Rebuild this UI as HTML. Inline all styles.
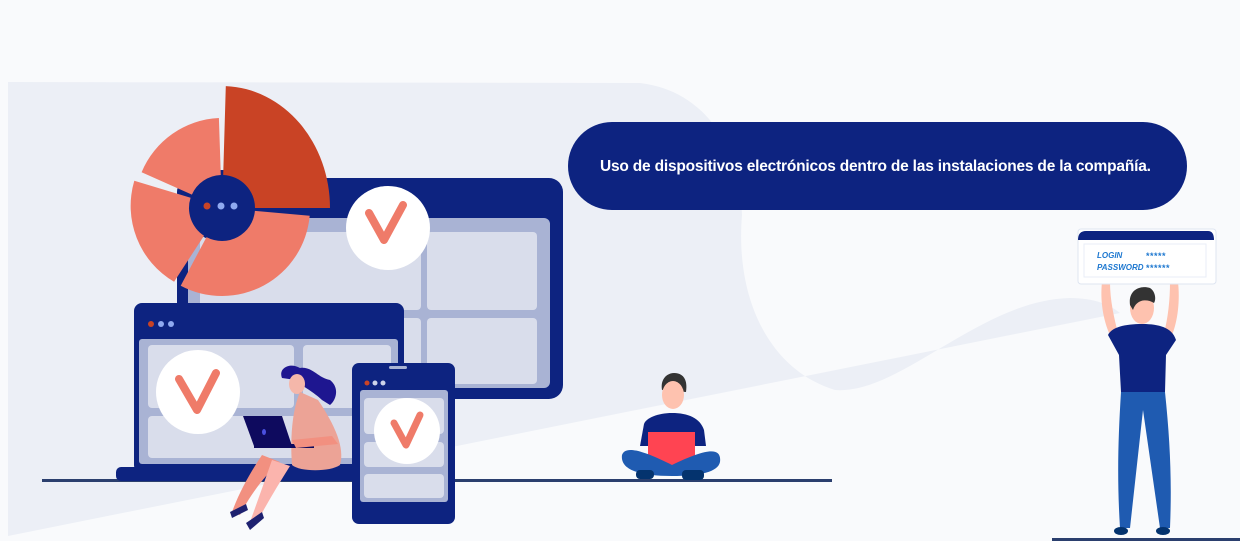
<!DOCTYPE html>
<html><head><meta charset="utf-8"><style>
html,body{margin:0;padding:0;width:1240px;height:541px;overflow:hidden;background:#f9fafc;}
svg{position:absolute;left:0;top:0}
.bubble{position:absolute;left:568px;top:122px;width:619px;height:88px;border-radius:44px;background:#0d2380;color:#fff;font:bold 15.5px "Liberation Sans",sans-serif;line-height:90px;box-sizing:border-box;padding-left:32px;letter-spacing:-0.2px;white-space:nowrap}
</style></head><body>
<svg width="1240" height="541" viewBox="0 0 1240 541">
<path d="M8,82 L640,83 C700,90 740,140 742,215 C735,300 770,370 835,390 C900,395 980,300 1070,298 C1095,298 1110,305 1120,313 L8,536 Z" fill="#eceff6"/>
<rect x="42" y="479" width="790" height="3" fill="#2b3f6e"/>
<rect x="1052" y="538" width="188" height="3" fill="#2b3f6e"/>
<rect x="177" y="178" width="386" height="221" rx="14" fill="#0d2380"/>
<rect x="188" y="218" width="362" height="170" rx="6" fill="#a9b3d4"/>
<rect x="200" y="232" width="221" height="78" rx="4" fill="#d9ddeb"/>
<rect x="427" y="232" width="110" height="78" rx="4" fill="#d9ddeb"/>
<rect x="200" y="318" width="221" height="66" rx="4" fill="#d9ddeb"/>
<rect x="427" y="318" width="110" height="66" rx="4" fill="#d9ddeb"/>
<circle cx="222" cy="206" r="36" fill="#0d2380"/>
<path d="M225.8,86.1 A108,122 0 0 1 330,208 L255,208 A33,33 0 0 0 223.2,175 Z" fill="#c94325"/>
<path d="M309.7,215.7 A88,88 0 0 1 180.7,285.7 L206.5,237.1 A33,33 0 0 0 254.9,210.9 Z" fill="#ef7b69"/>
<path d="M174.1,281.8 A88,88 0 0 1 134.3,180.8 L190.6,197.8 A33,33 0 0 0 204,235.7 Z" fill="#ef7b69"/>
<path d="M141.6,172.2 A88,88 0 0 1 218.9,118 L220.8,175 A33,33 0 0 0 191.9,194.6 Z" fill="#ef7b69"/>
<circle cx="207" cy="206" r="3.5" fill="#c94325"/><circle cx="221" cy="206" r="3.5" fill="#8fa9f0"/><circle cx="234" cy="206" r="3.5" fill="#8fa9f0"/>
<circle cx="388" cy="228" r="42" fill="#fff"/>
<path d="M369,213 L384,240 L403,205" fill="none" stroke="#ef7b69" stroke-width="8" stroke-linecap="round" stroke-linejoin="round"/>
<rect x="134" y="303" width="270" height="170" rx="8" fill="#0d2380"/>
<rect x="116" y="467" width="240" height="14" rx="5" fill="#0d2380"/>
<rect x="139" y="339" width="259" height="125" rx="3" fill="#a9b3d4"/>
<rect x="148" y="345" width="146" height="63" rx="4" fill="#d9ddeb"/>
<rect x="303" y="345" width="88" height="63" rx="4" fill="#d9ddeb"/>
<rect x="148" y="416" width="243" height="42" rx="4" fill="#d9ddeb"/>
<circle cx="151" cy="324" r="3" fill="#c94325"/><circle cx="161" cy="324" r="3" fill="#8fa9f0"/><circle cx="171" cy="324" r="3" fill="#8fa9f0"/>
<circle cx="198" cy="392" r="42" fill="#fff"/>
<path d="M179,379 L197,410 L216,373" fill="none" stroke="#ef7b69" stroke-width="8" stroke-linecap="round" stroke-linejoin="round"/>
<path d="M282,378 C278,368 290,362 300,368 C312,366 318,378 330,380 C340,388 336,400 330,405 L322,400 C314,392 300,385 296,380 Z" fill="#1e1690"/>
<ellipse cx="297" cy="384" rx="8" ry="10" fill="#f5b7aa"/>
<path d="M300,392 C292,410 290,440 292,465 C300,472 330,472 340,465 C345,448 335,425 318,400 Z" fill="#eca396"/>
<path d="M262,455 C252,470 240,490 232,512 L240,515 C250,495 265,475 280,462 Z" fill="#f29080"/>
<path d="M272,460 C265,480 258,500 250,522 L256,524 C266,505 278,485 290,466 Z" fill="#fbb4ad"/>
<path d="M230,512 L246,504 L248,510 L232,518 Z" fill="#1e2170"/>
<path d="M246,523 L262,512 L264,518 L250,530 Z" fill="#1e2170"/>
<path d="M243,416 L282,416 L292,446 L254,446 Z" fill="#0e0a5e"/>
<rect x="254" y="444" width="60" height="4" fill="#0e0a5e"/>
<ellipse cx="264" cy="432" rx="2" ry="3" fill="#4b50e0"/>
<path d="M292,440 L332,436 L338,444 L296,448 Z" fill="#f29080"/>
<rect x="352" y="363" width="103" height="161" rx="7" fill="#0d2380"/>
<rect x="360" y="390" width="88" height="112" rx="3" fill="#a9b3d4"/>
<rect x="364" y="398" width="80" height="36" rx="4" fill="#d9ddeb"/>
<rect x="364" y="442" width="80" height="25" rx="4" fill="#d9ddeb"/>
<rect x="364" y="474" width="80" height="24" rx="4" fill="#d9ddeb"/>
<rect x="389" y="366" width="18" height="3" rx="1.5" fill="#a9b3d4"/>
<circle cx="367" cy="383" r="2.5" fill="#c94325"/><circle cx="375" cy="383" r="2.5" fill="#cdd4ea"/><circle cx="383" cy="383" r="2.5" fill="#cdd4ea"/>
<circle cx="407" cy="431" r="33" fill="#fff"/>
<path d="M394,423 L406,445 L420,415" fill="none" stroke="#ef7b69" stroke-width="7" stroke-linecap="round" stroke-linejoin="round"/>
<path d="M662,390 C660,378 668,373 674,373 C682,373 688,378 686,392 Z" fill="#333"/>
<ellipse cx="673" cy="395" rx="11" ry="14" fill="#fec2af"/>
<path d="M644,424 C646,418 658,413 672,413 C688,413 700,418 704,430 L706,446 L640,446 Z" fill="#0d2380"/>
<rect x="648" y="432" width="47" height="34" fill="#ff4452"/>
<path d="M622,455 C625,446 640,449 672,465 C705,449 722,446 720,462 C718,472 700,476 672,476 C640,476 620,470 622,455 Z" fill="#1f5bb1"/>
<rect x="636" y="470" width="18" height="9" rx="4" fill="#04336e"/>
<rect x="682" y="470" width="22" height="10" rx="4" fill="#04336e"/>
<path d="M1102,282 C1100,300 1103,320 1110,335 L1118,333 C1114,318 1110,300 1110,282 Z" fill="#fec2af"/>
<path d="M1178,282 C1180,300 1178,320 1172,335 L1164,333 C1168,318 1170,300 1170,282 Z" fill="#fec2af"/>
<ellipse cx="1142" cy="308" rx="12" ry="16" fill="#fec2af"/>
<path d="M1130,305 C1128,290 1140,285 1150,288 C1156,292 1156,300 1154,303 C1146,298 1136,300 1133,310 Z" fill="#333"/>
<path d="M1108,335 C1112,327 1125,324 1142,324 C1158,324 1172,327 1176,340 L1166,355 L1165,392 L1121,392 L1119,355 Z" fill="#0d2380"/>
<path d="M1121,392 L1165,392 C1170,440 1172,480 1170,528 L1160,528 L1143,410 L1130,528 L1120,528 C1117,480 1118,440 1121,392 Z" fill="#1f5bb1"/>
<ellipse cx="1121" cy="531" rx="7" ry="4" fill="#04336e"/>
<ellipse cx="1163" cy="531" rx="7" ry="4" fill="#04336e"/>
<rect x="1078" y="229" width="138" height="55" rx="3" fill="#fff" stroke="#dfe5f1"/>
<path d="M1078,240 Q1078,231 1086,231 L1208,231 Q1214,231 1214,240 Z" fill="#0d2380"/>
<rect x="1084" y="244" width="122" height="33" fill="none" stroke="#e8eef7"/>
<text x="1097" y="258" font-family="Liberation Sans,sans-serif" font-size="8" font-style="italic" font-weight="bold" fill="#1e78d0">LOGIN</text>
<text x="1097" y="270" font-family="Liberation Sans,sans-serif" font-size="8" font-style="italic" font-weight="bold" fill="#1e78d0">PASSWORD</text>
<text x="1146" y="259" font-family="Liberation Sans,sans-serif" font-size="9" font-weight="bold" fill="#1e78d0" letter-spacing="0.5">*****</text>
<text x="1146" y="271" font-family="Liberation Sans,sans-serif" font-size="9" font-weight="bold" fill="#1e78d0" letter-spacing="0.5">******</text>
</svg>
<div class="bubble">Uso de dispositivos electrónicos dentro de las instalaciones de la compañía.</div>
</body></html>
